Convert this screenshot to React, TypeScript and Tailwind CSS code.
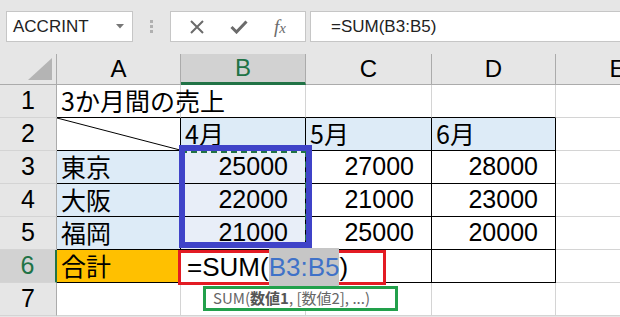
import React from "react";

const cellFont = { fontFamily: '"Liberation Sans", "Noto Sans CJK JP", sans-serif' };
const jpFont = { fontFamily: '"Noto Sans CJK JP", "Liberation Sans", sans-serif' };

type Cell = {
  text?: React.ReactNode;
  align?: "left" | "right";
  bg?: string;
  black?: { r?: boolean; b?: boolean };
  jp?: boolean;
  diag?: boolean;
};

function DataCell({ c }: { c: Cell }) {
  return (
    <div
      className={
        "relative box-border flex items-center overflow-visible whitespace-nowrap text-[25px] text-black border-r border-b " +
        (c.black?.r ? "border-r-black " : "border-r-[#d4d4d4] ") +
        (c.black?.b ? "border-b-black " : "border-b-[#d4d4d4] ") +
        (c.align === "right" ? "justify-end pr-[17px] " : "justify-start pl-[4px] ") +
        (c.bg ?? "bg-transparent")
      }
      style={c.jp ? jpFont : cellFont}
    >
      {c.diag && (
        <svg className="absolute inset-0" width="100%" height="100%" preserveAspectRatio="none" viewBox="0 0 100 100">
          <line x1="0" y1="0" x2="100" y2="100" stroke="black" strokeWidth="1" vectorEffect="non-scaling-stroke" />
        </svg>
      )}
      {c.text}
    </div>
  );
}

export default function App() {
  const colHeaders = ["A", "B", "C", "D", "E"];
  const blue = "bg-[#ddebf7]";
  const sel = "bg-[#e8eef8]";
  const rows: Cell[][] = [
    [
      { text: "3か月間の売上", jp: true, black: { b: true } },
      { black: { b: true } },
      { black: { b: true } },
      { black: { b: true } },
      {},
    ],
    [
      { diag: true, black: { r: true, b: true } },
      { text: "4月", jp: true, bg: blue, black: { r: true, b: true } },
      { text: "5月", jp: true, bg: blue, black: { r: true, b: true } },
      { text: "6月", jp: true, bg: blue, black: { r: true, b: true } },
      {},
    ],
    [
      { text: "東京", jp: true, bg: blue, black: { r: true, b: true } },
      { text: "25000", align: "right", bg: sel, black: { r: true, b: true } },
      { text: "27000", align: "right", black: { r: true, b: true } },
      { text: "28000", align: "right", black: { r: true, b: true } },
      {},
    ],
    [
      { text: "大阪", jp: true, bg: blue, black: { r: true, b: true } },
      { text: "22000", align: "right", bg: sel, black: { r: true, b: true } },
      { text: "21000", align: "right", black: { r: true, b: true } },
      { text: "23000", align: "right", black: { r: true, b: true } },
      {},
    ],
    [
      { text: "福岡", jp: true, bg: blue, black: { r: true, b: true } },
      { text: "21000", align: "right", bg: sel, black: { r: true, b: true } },
      { text: "25000", align: "right", black: { r: true, b: true } },
      { text: "20000", align: "right", black: { r: true, b: true } },
      {},
    ],
    [
      { text: "合計", jp: true, bg: "bg-[#ffc000]", black: { r: true, b: true } },
      { black: { r: true, b: true } },
      { black: { r: true, b: true } },
      { black: { r: true, b: true } },
      {},
    ],
    [{}, {}, {}, {}, {}],
  ];

  return (
    <div className="w-[620px] h-[317px] overflow-hidden bg-[#e6e6e6] flex flex-col" style={cellFont}>
      {/* toolbar */}
      <div className="h-[54px] flex items-start pt-[11px] pl-[6px] shrink-0">
        <div className="w-[127px] h-[31px] bg-white border border-[#c6c6c6] box-border flex items-center justify-between pl-[6px] pr-[8px]">
          <span className="text-[17px] text-[#222] leading-none">ACCRINT</span>
          <svg width="8" height="5" viewBox="0 0 8 5">
            <path d="M0 0 L8 0 L4 4.5 Z" fill="#777" />
          </svg>
        </div>
        <div className="w-[37px] h-[31px] flex flex-col items-center justify-center gap-[2px]">
          <div className="w-[3px] h-[3px] bg-[#b0b0b0]" />
          <div className="w-[3px] h-[3px] bg-[#b0b0b0]" />
          <div className="w-[3px] h-[3px] bg-[#b0b0b0]" />
        </div>
        <div className="w-[136px] h-[31px] bg-white border border-[#c6c6c6] box-border flex items-center justify-around px-[6px]">
          <svg width="14" height="14" viewBox="0 0 14 14">
            <path d="M1 1 L13 13 M13 1 L1 13" stroke="#6b6b6b" strokeWidth="2" />
          </svg>
          <svg width="18" height="14" viewBox="0 0 18 14">
            <path d="M1.5 7 L6.5 12 L16.5 1.5" stroke="#6b6b6b" strokeWidth="3" fill="none" />
          </svg>
          <span className="text-[19px] text-[#6b6b6b] italic leading-none" style={{ fontFamily: '"Liberation Serif", serif' }}>
            f<span className="text-[15px]">x</span>
          </span>
        </div>
        <div className="ml-[4px] flex-1 h-[31px] bg-white border border-[#c6c6c6] border-r-0 box-border flex items-center pl-[20px]">
          <span className="text-[17px] text-[#222] leading-none">=SUM(B3:B5)</span>
        </div>
      </div>

      {/* grid */}
      <div className="relative grid grid-cols-[57px_124px_125px_126px_124px_124px] grid-rows-[31px_repeat(7,33px)] bg-white">
        {/* select all */}
        <div className="bg-[#e6e6e6] border-r border-b border-[#ababab] box-border relative">
          <svg className="absolute right-[4px] bottom-[4px]" width="24" height="22" viewBox="0 0 24 22">
            <path d="M24 0 L24 22 L0 22 Z" fill="#b4b4b4" />
          </svg>
        </div>
        {colHeaders.map((h) => (
          <div
            key={h}
            className={
              "box-border flex items-center justify-center text-[24px] border-r border-r-[#ababab] " +
              (h === "B"
                ? "bg-[#d2d2d2] text-[#217346] border-b-[3px] border-b-[#217346]"
                : "bg-[#e6e6e6] text-black border-b border-b-[#ababab]")
            }
          >
            {h}
          </div>
        ))}
        {rows.map((r, i) => (
          <React.Fragment key={i}>
            <div
              className={
                "box-border flex items-center justify-center text-[25px] border-b border-b-[#d4d4d4] " +
                (i === 5
                  ? "bg-[#d2d2d2] text-[#217346] border-r-[2px] border-r-[#217346]"
                  : "bg-[#e6e6e6] text-black border-r border-r-[#ababab]")
              }
            >
              {i + 1}
            </div>
            {r.map((c, j) => (
              <DataCell key={j} c={c} />
            ))}
          </React.Fragment>
        ))}

        {/* copy marquee */}
        <div className="absolute left-[181px] top-[97px] w-[126px] h-[100px] border-t-2 border-r-2 border-dashed border-[#217346]" />
        {/* blue range */}
        <div className="absolute left-[179px] top-[91px] w-[133px] h-[103px] border-[6px] border-[#3f43c8]" />
        {/* red edit cell */}
        <div className="absolute left-[178px] top-[196px] w-[208px] h-[35px] border-[3px] border-[#e31b23] bg-white flex items-center pl-[6px] text-[26px] text-black whitespace-nowrap">
          =SUM(<span className="bg-[#c6c6c6] text-[#3f72c8]">B3:B5</span>)
        </div>
        {/* tooltip */}
        <div
          className="absolute left-[203px] top-[232px] w-[195px] h-[25px] border-[3px] border-[#22a04b] bg-white flex items-center pl-[7px] text-[15px] text-[#666] whitespace-nowrap"
          style={jpFont}
        >
          SUM(<b className="text-[#555]">数値1</b>, [数値2], ...)
        </div>
      </div>
    </div>
  );
}
